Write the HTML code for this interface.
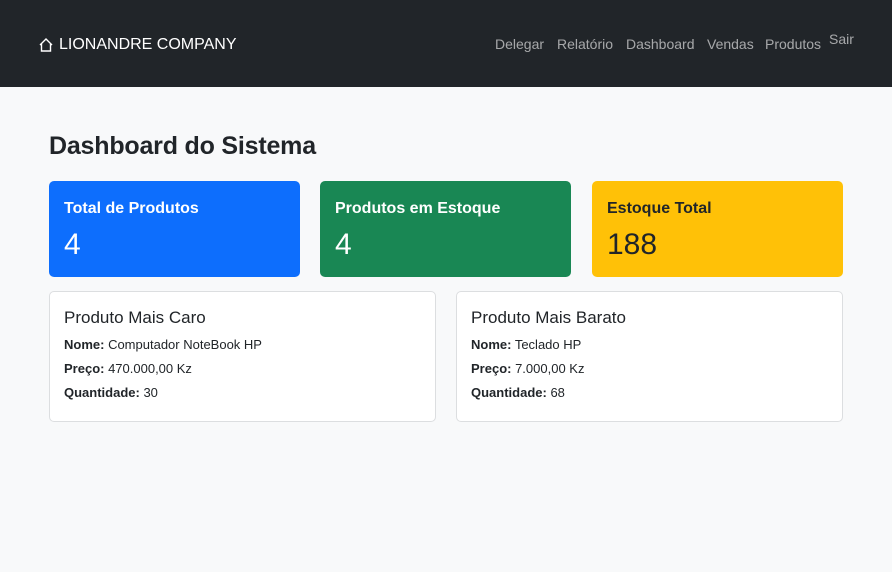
<!DOCTYPE html>
<html><head><style>
*{box-sizing:border-box;margin:0;padding:0}
body{width:892px;height:572px;background:#f8f9fa;font-family:"Liberation Sans",sans-serif;color:#212529;position:relative;overflow:hidden}
nav{position:absolute;left:0;top:0;width:892px;height:87px;background:#212529}
.brand{position:absolute;left:38px;top:36px;color:#fff;font-size:16px;display:flex;align-items:center;gap:5px}
.links{position:absolute;top:36px;font-size:14px;color:rgba(255,255,255,.6)}
.links span{position:absolute;white-space:nowrap}
h1{position:absolute;left:49px;top:132px;font-size:25px;font-weight:bold;letter-spacing:-0.2px}
.card{position:absolute;top:181px;width:251px;height:96px;border-radius:5px;padding:19px 15px}
.card .t{font-size:16px;font-weight:bold}
.card .v{font-size:30px;font-weight:300;margin-top:10px}
.box{position:absolute;top:291px;width:387px;height:131px;background:#fff;border:1px solid #dcdee0;border-radius:5px;padding:16px 14px}
.box .h{font-size:17px;margin-bottom:9px}
.box p{font-size:13px;margin-bottom:9px;line-height:15px}
</style></head><body>
<nav>
<div class="brand"><svg width="16" height="16" viewBox="0 0 16 16" fill="none" stroke="#fff" stroke-width="1.4"><path d="M2 8 L8 2 L14 8 M3.5 6.5 V14 H12.5 V6.5"/></svg>LIONANDRE COMPANY</div>
<div class="links"><span style="left:495px">Delegar</span><span style="left:557px">Relatório</span><span style="left:626px">Dashboard</span><span style="left:707px">Vendas</span><span style="left:765px">Produtos</span><span style="left:829px;top:-5px">Sair</span></div>
</nav>
<h1>Dashboard do Sistema</h1>
<div class="card" style="left:49px;background:#0d6efd;color:#fff"><div class="t">Total de Produtos</div><div class="v">4</div></div>
<div class="card" style="left:320px;background:#198754;color:#fff"><div class="t">Produtos em Estoque</div><div class="v">4</div></div>
<div class="card" style="left:592px;background:#ffc107;color:#212529"><div class="t">Estoque Total</div><div class="v">188</div></div>
<div class="box" style="left:49px"><div class="h">Produto Mais Caro</div><p><b>Nome:</b> Computador NoteBook HP</p><p><b>Preço:</b> 470.000,00 Kz</p><p><b>Quantidade:</b> 30</p></div>
<div class="box" style="left:456px"><div class="h">Produto Mais Barato</div><p><b>Nome:</b> Teclado HP</p><p><b>Preço:</b> 7.000,00 Kz</p><p><b>Quantidade:</b> 68</p></div>
</body></html>
